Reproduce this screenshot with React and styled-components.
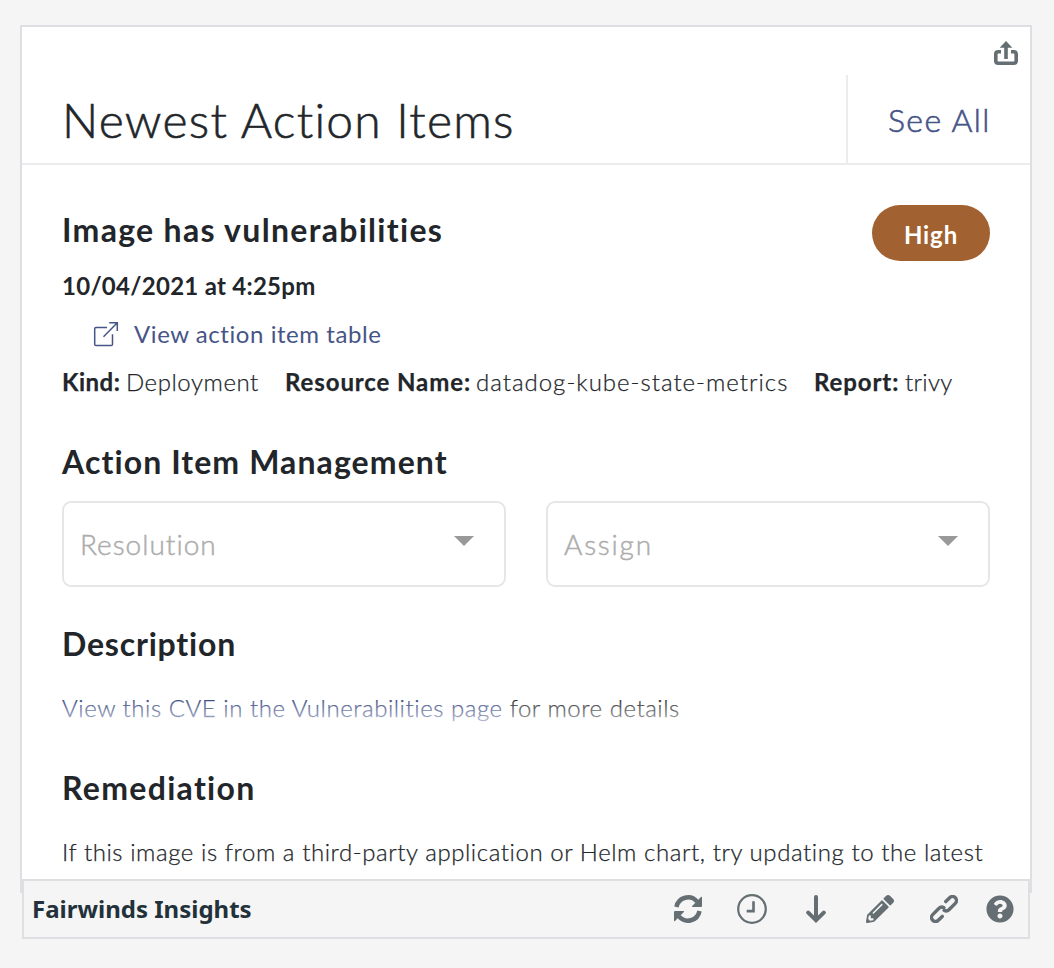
import React from 'react';
import styled, { createGlobalStyle } from 'styled-components';
import { FaPencilAlt, FaQuestionCircle } from 'react-icons/fa';

const GlobalStyle = createGlobalStyle`
  * { box-sizing: border-box; }
  body {
    margin: 0;
    background: #f5f5f5;
    color: #22262a;
    font-family: Lato, "Liberation Sans", sans-serif;
  }
`;

const Page = styled.main`
  width: 1054px;
  height: 968px;
  padding: 25px 22px 0 20px;
  overflow: hidden;
`;

const Card = styled.section`
  height: 868px;
  border: 2px solid #dedee3;
  background: #fff;
  overflow: hidden;
`;

const CardTools = styled.div`
  display: flex;
  justify-content: flex-end;
  height: 48px;
  padding: 13px 11px 0 0;
  color: #656e73;
`;

const Header = styled.header`
  display: flex;
  height: 90px;
  border-bottom: 2px solid #ececee;
`;

const Title = styled.h1`
  flex: 1;
  margin: 0;
  padding-left: 40px;
  font-size: 48px;
  font-weight: 300;
  line-height: 90px;
  letter-spacing: 1.24px;
  -webkit-text-stroke: 0.6px currentColor;
`;

const SeeAll = styled.a`
  width: 184px;
  padding-left: 40px;
  border-left: 2px solid #ececee;
  color: #465487;
  font-size: 32px;
  font-weight: 300;
  line-height: 90px;
  letter-spacing: 1.4px;
  -webkit-text-stroke: 0.6px currentColor;
`;

const Body = styled.div`
  padding: 40px 40px 0;
`;

const TopRow = styled.div`
  display: flex;
  justify-content: space-between;
  height: 57px;
`;

const Heading = styled.h2`
  margin: 0;
  padding-top: ${(p) => p.$top || 0}px;
  font-size: 32px;
  font-weight: 700;
  line-height: 40px;
  letter-spacing: ${(p) => p.$track}px;
`;

const Badge = styled.span`
  display: flex;
  align-items: center;
  justify-content: center;
  width: 118px;
  height: 56px;
  padding-top: 2px;
  border-radius: 28px;
  background: #a16130;
  color: #fff;
  font-size: 24px;
  font-weight: 700;
  letter-spacing: 0.9px;
`;

const Line = styled.div`
  display: flex;
  align-items: center;
  height: 48px;
  font-size: 24px;
  font-weight: ${(p) => p.$weight || 300};
  line-height: 48px;
  letter-spacing: ${(p) => p.$track || 0}px;
  white-space: pre;
`;

const TableLink = styled.a`
  display: flex;
  align-items: center;
  gap: 15px;
  padding-left: 31px;
  color: #465487;
`;

const Field = styled.span`
  width: ${(p) => p.$width}px;
  letter-spacing: ${(p) => p.$track}px;
  -webkit-text-stroke: 0.25px currentColor;
`;

const Label = styled.b`
  display: inline-block;
  width: ${(p) => p.$width}px;
  font-weight: 700;
  letter-spacing: ${(p) => p.$track}px;
`;

const Selects = styled.div`
  display: grid;
  grid-template-columns: 1fr 1fr;
  gap: 40px;
  margin: 19px 0 37px;
`;

const Select = styled.div`
  display: flex;
  align-items: center;
  justify-content: space-between;
  height: 86px;
  padding: 0 30px 0 16px;
  border: 2px solid #e6e6e7;
  border-radius: 9px;
  color: #adadad;
  font-size: 28px;
  font-weight: 300;
  letter-spacing: ${(p) => p.$track}px;
  -webkit-text-stroke: 0.5px currentColor;

  &::after {
    content: '';
    margin-bottom: 6px;
    border: 10px solid transparent;
    border-top-color: #999;
    border-bottom-width: 0;
  }
`;

const Paragraph = styled.p`
  position: relative;
  margin: 20px 0 36px;
  font-size: 24px;
  font-weight: 300;
  line-height: 48px;
  letter-spacing: ${(p) => p.$track}px;
  white-space: nowrap;
  -webkit-text-stroke: 0.25px currentColor;
`;

const Fade = styled.span`
  position: absolute;
  inset: 14px 0 0;
  background: linear-gradient(rgba(255, 255, 255, 0), rgba(255, 255, 255, 0.7) 28px);
  pointer-events: none;
`;

const CveLink = styled.a`
  color: #34467f;
`;

const Footer = styled.footer`
  position: relative;
  display: flex;
  align-items: center;
  justify-content: space-between;
  height: 60px;
  margin: -14px 2px 0;
  padding: 0 18px 0 8px;
  border: 2px solid #dedee3;
  background: #f5f5f5;
`;

const Source = styled.strong`
  padding-bottom: 2px;
  color: #22313a;
  font: 700 24px "Noto Sans", sans-serif;
`;

const Actions = styled.div`
  display: flex;
  align-items: center;
  gap: 28px;
  color: #656e73;
`;

const Action = styled.span`
  display: flex;
  justify-content: center;
  width: ${(p) => p.$width || 36}px;

  svg { flex-shrink: 0; }
`;

const ShareIcon = () => (
  <svg width="26" height="26" viewBox="0 0 26 26" fill="none" stroke="currentColor" strokeWidth="3.6">
    <path d="M8 11.8H5.2Q2.8 11.8 2.8 14v7q0 2.2 2.4 2.2h15.6q2.4 0 2.4-2.2v-7q0-2.2-2.4-2.2H18" />
    <path d="M13 19V6" />
    <path d="M13 1l6.3 6.7H6.7z" fill="currentColor" stroke="none" />
  </svg>
);

const OpenIcon = () => (
  <svg width="26" height="26" viewBox="0 0 26 26" fill="none" stroke="currentColor" strokeWidth="1.5">
    <path d="M14 6.5H3Q1.7 6.5 1.7 7.8v15.4q0 1.3 1.3 1.3h15.2q1.3 0 1.3-1.3V13.2" />
    <path d="M10.5 15.8L24.3 1.8M16.2 1.7h8.1v8.4" />
  </svg>
);

const RefreshHalf = ({ turn }) => (
  <g transform={`rotate(${turn} 14 14)`}>
    <path d="M2.5 12A11.7 11.7 0 0 1 23 6.6" fill="none" stroke="currentColor" strokeWidth="4.5" />
    <path d="M27.2 1.8Q28 1.4 28 2.4V11q0 1-1 1h-8.2q-1.5 0-.6-1.1z" fill="currentColor" />
  </g>
);

const RefreshIcon = () => (
  <svg width="28" height="28" viewBox="0 0 28 28">
    <RefreshHalf turn={0} />
    <RefreshHalf turn={180} />
  </svg>
);

const ClockIcon = () => (
  <svg width="30" height="30" viewBox="0 0 30 30" fill="none" stroke="currentColor">
    <circle cx="15" cy="15" r="13.8" strokeWidth="2.2" />
    <path d="M16.5 7.2v9.9H9.7" strokeWidth="2.6" />
  </svg>
);

const ArrowIcon = () => (
  <svg width="20" height="28" viewBox="0 0 20 28" fill="none" stroke="currentColor" strokeWidth="4" strokeLinecap="round">
    <path d="M10 2v22" />
    <path d="M2.2 17.6L10 25.2l7.8-7.6" />
  </svg>
);

const ChainIcon = () => (
  <svg width="28" height="28" viewBox="0 0 28 28" fill="none" stroke="currentColor" strokeWidth="3.4" strokeLinecap="round">
    <g transform="translate(14 14) rotate(-45)">
      <path d="M6.5-4H12A4 4 0 0 1 12 4H3A4 4 0 0 1-.8 1" />
      <path d="M-6.5 4H-12A4 4 0 0 1-12-4H-3A4 4 0 0 1 .8-1" />
    </g>
  </svg>
);

export default function App() {
  return (
    <>
      <GlobalStyle />
      <Page>
        <Card>
          <CardTools><ShareIcon /></CardTools>
          <Header>
            <Title>Newest Action Items</Title>
            <SeeAll>See All</SeeAll>
          </Header>
          <Body>
            <TopRow>
              <Heading $top={5} $track={1.3}>Image has vulnerabilities</Heading>
              <Badge>High</Badge>
            </TopRow>
            <Line $weight={700} $track={0.28}>10/04/2021 at 4:25pm</Line>
            <Line $weight={400} $track={0.56}>
              <TableLink><OpenIcon />View action item table</TableLink>
            </Line>
            <Line>
              <Field $width={223} $track={0.55}><Label $width={64} $track={0.5}>Kind:</Label>Deployment</Field>
              <Field $width={529} $track={1}><Label $width={191} $track={0.9}>Resource Name:</Label>datadog-kube-state-metrics</Field>
              <Field $width={150} $track={0.3}><Label $width={91} $track={0.9}>Report:</Label>trivy</Field>
            </Line>
            <Heading $top={36} $track={1.1}>Action Item Management</Heading>
            <Selects>
              <Select $track={1}>Resolution</Select>
              <Select $track={1.8}>Assign</Select>
            </Selects>
            <Heading $track={0.8}>Description</Heading>
            <Paragraph $track={0.54}>
              <CveLink>View this CVE in the Vulnerabilities page</CveLink> for more details
              <Fade />
            </Paragraph>
            <Heading $track={1.3}>Remediation</Heading>
            <Paragraph $track={0.57}>If this image is from a third-party application or Helm chart, try updating to the latest</Paragraph>
          </Body>
        </Card>
        <Footer>
          <Source>Fairwinds Insights</Source>
          <Actions>
            <Action><RefreshIcon /></Action>
            <Action><ClockIcon /></Action>
            <Action><ArrowIcon /></Action>
            <Action><FaPencilAlt size={28} /></Action>
            <Action><ChainIcon /></Action>
            <Action $width={20}><FaQuestionCircle size={28} /></Action>
          </Actions>
        </Footer>
      </Page>
    </>
  );
}
